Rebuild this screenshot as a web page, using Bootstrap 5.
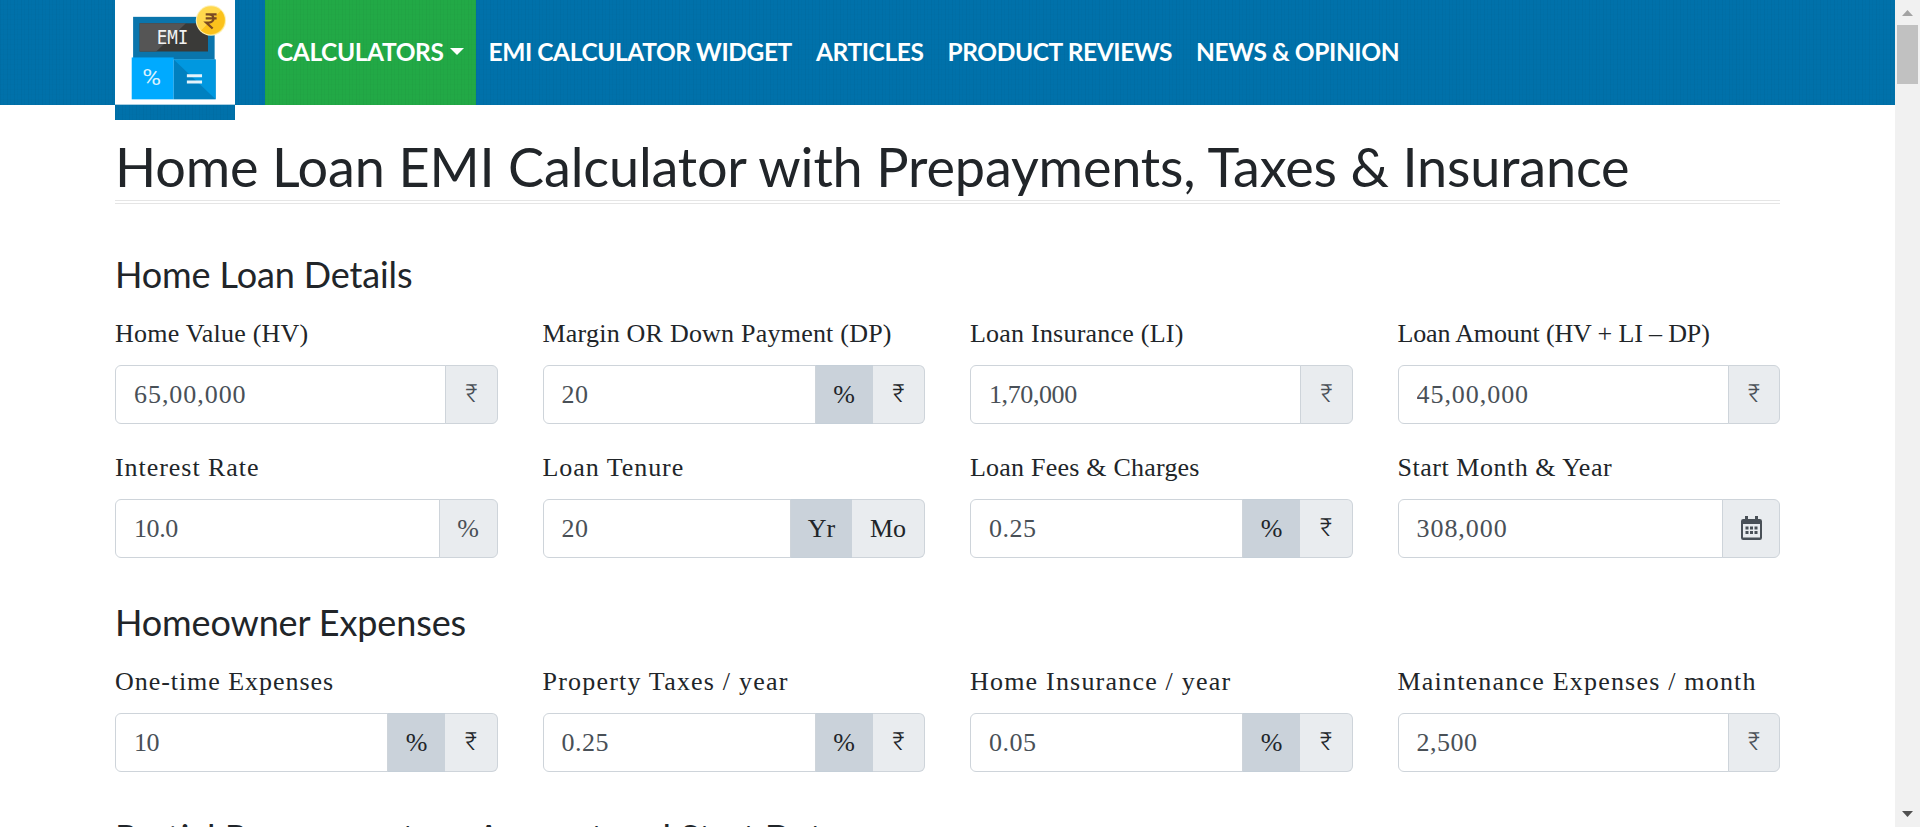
<!DOCTYPE html>
<html lang="en">
<head>
<meta charset="utf-8">
<meta name="viewport" content="width=device-width, initial-scale=1">
<title>Home Loan EMI Calculator</title>
<link href="https://cdn.jsdelivr.net/npm/bootstrap@5.3.0/dist/css/bootstrap.min.css" rel="stylesheet">
<style>
  body { font-family: "Liberation Serif", serif; font-size: 26px; line-height: 36px; color: #212529; height: 827px; }
  .weave { background-image:
      repeating-linear-gradient(90deg, rgba(0,0,0,.03) 0 1px, transparent 1px 3px, rgba(0,0,0,.015) 3px 4px, transparent 4px 7px),
      repeating-linear-gradient(0deg, rgba(0,0,0,.01) 0 1px, transparent 1px 5px); }
  .topbar { background-color: #0071aa; height: 105px; padding-left: 115px; }
  .brand-tile { width: 120px; height: 120px; margin-right: 30px; background-color: #0071aa; }
  .brand-tile svg { display: block; background-color: #fff; border-bottom: 1px solid #a9cfe2; }
  .topbar .nav-link { font: 700 24.5px/36px Lato, sans-serif; letter-spacing: -.4px; color: #fff; padding: 0 12px 1px; height: 105px; display: flex; align-items: center; white-space: nowrap; }
  .topbar .nav-link.active { background-color: #22a946; color: #fff; }
  .topbar .dropdown-toggle::after { margin-left: 7px; vertical-align: 0; margin-top: -1px; border-top-width: 7px; border-left-width: 7px; border-right-width: 7px; }
  .sheet { padding: 0 115px; }
  h1, h2 { font-family: Lato, sans-serif; font-weight: 400; white-space: nowrap; }
  h1 { font-size: 54px; line-height: 65px; letter-spacing: -.15px; margin: 29px 0 0; height: 70px; border-bottom: 4px double #e5e5e5; }
  h2 { font-size: 36px; line-height: 43px; letter-spacing: -.12px; }
  .group-title { margin: 49px 0 20px; }
  .group-title-next { margin: 43px 0 20px; }
  .group-title-last { margin: 44px 0 0; letter-spacing: 0; }
  .fields { --bs-gutter-x: 45px; --bs-gutter-y: 0; row-gap: 26px; }
  .fields .form-label { height: 36px; margin: 0 0 13px; display: block; letter-spacing: .22px; white-space: nowrap; }
  .fields .form-label.snug { letter-spacing: -.15px; }
  .fields .form-label.airy { letter-spacing: .53px; }
  .fields .form-label.wide { letter-spacing: .95px; }
  .fields .form-label.wider { letter-spacing: 1.2px; }
  .fields .input-group { height: 59px; }
  .fields .form-control { font-size: 26px; letter-spacing: .5px; color: #495057; border-color: #ced4da; border-radius: 6px; padding: 0 18px; }
  .fields .form-control.open { letter-spacing: .95px; }
  .fields .form-control.tight { letter-spacing: -.4px; }
  .fields .input-group-text { font-size: 26px; color: #495057; background-color: #e9ecef; border-color: #ced4da; border-radius: 6px; padding: 0 0 1px; justify-content: center; }
  .fields .unit { color: #212529; border-left: 0; }
  .fields .unit.chosen { background-color: #cad2da; border-color: #c5cfd8; border-left: 1px solid #c5cfd8; }
  .fields .w-rs { width: 52.500px; font-family: Roboto, sans-serif; font-weight: 300; font-size: 25px; }
  .w-pc { width: 59px; } .w-cal { width: 58px; } .w-yr { width: 63px; } .w-mo { width: 73px; }
  .scroller { width: 25px; background-color: #f1f1f1; padding: 10px 2px; }
  .scroller .thumb { height: 59px; background-color: #c1c1c1; margin-top: 9px; }
</style>
</head>
<body class="d-flex overflow-hidden bg-white">
<div class="flex-grow-1 overflow-hidden">
  <nav class="topbar weave d-flex align-items-start">
    <a class="brand-tile weave d-block flex-shrink-0" href="#" aria-label="EMI Calculator">
      <svg width="120" height="105" viewBox="0 0 120 105">
        <rect x="17.7" y="17" width="82.3" height="43" fill="#0a75ac"/>
        <rect x="24.3" y="23.5" width="69" height="28.5" fill="#3a3a38"/>
        <path d="M24.3 23.5H71L41 52H24.3z" fill="#555"/>
        <rect x="16.3" y="58" width="42.4" height="42.3" fill="#00aaff"/>
        <rect x="58.7" y="60" width="42.3" height="40.3" fill="#0080c0"/>
        <path d="M58.7 60H101v40.3z" fill="#0098e0"/>
        <text x="41.500" y="44" font-family="DejaVu Sans Mono, monospace" font-size="19" textLength="32" lengthAdjust="spacingAndGlyphs" fill="#f2f2f2">EMI</text>
        <text x="27" y="86" font-family="Roboto, sans-serif" font-size="22" textLength="19" lengthAdjust="spacingAndGlyphs" fill="#d9f2ff">%</text>
        <path d="M72 76.5h15.3M72 82.8h15.3" stroke="#e4f3fb" stroke-width="3"/>
        <circle cx="96.3" cy="20.7" r="15.3" fill="#fdf0b5"/>
        <circle cx="96.3" cy="20.7" r="14.3" fill="#ffd84d"/>
        <path d="M106.4 10.6A14.3 14.3 0 0 1 86.2 30.8z" fill="#fbc21c"/>
        <path d="M91 14.500h11M91 18.600h11M91 14.500h3c6.500 0 6.500 8.300 0 8.300H91.500l6.500 6" fill="none" stroke="#7a4a22" stroke-width="2.300"/>
      </svg>
    </a>
    <ul class="nav flex-nowrap">
      <li class="nav-item"><a class="nav-link active weave dropdown-toggle" href="#">CALCULATORS</a></li>
      <li class="nav-item"><a class="nav-link" href="#">EMI CALCULATOR WIDGET</a></li>
      <li class="nav-item"><a class="nav-link" href="#">ARTICLES</a></li>
      <li class="nav-item"><a class="nav-link" href="#">PRODUCT REVIEWS</a></li>
      <li class="nav-item"><a class="nav-link" href="#">NEWS &amp; OPINION</a></li>
    </ul>
  </nav>
  <main class="sheet">
    <h1>Home Loan EMI Calculator with Prepayments, Taxes &amp; Insurance</h1>
    <h2 class="group-title">Home Loan Details</h2>
    <div class="row row-cols-4 fields">
      <div class="col"><label class="form-label" for="hv">Home Value (HV)</label>
        <div class="input-group flex-nowrap"><input id="hv" class="form-control open" value="65,00,000"><span class="input-group-text w-rs">₹</span></div></div>
      <div class="col"><label class="form-label" for="dp">Margin OR Down Payment (DP)</label>
        <div class="input-group flex-nowrap"><input id="dp" class="form-control" value="20"><span class="input-group-text unit chosen w-pc">%</span><span class="input-group-text unit w-rs">₹</span></div></div>
      <div class="col"><label class="form-label" for="li">Loan Insurance (LI)</label>
        <div class="input-group flex-nowrap"><input id="li" class="form-control tight" value="1,70,000"><span class="input-group-text w-rs">₹</span></div></div>
      <div class="col"><label class="form-label snug" for="la">Loan Amount (HV + LI – DP)</label>
        <div class="input-group flex-nowrap"><input id="la" class="form-control open" value="45,00,000"><span class="input-group-text w-rs">₹</span></div></div>
      <div class="col"><label class="form-label wide" for="ir">Interest Rate</label>
        <div class="input-group flex-nowrap"><input id="ir" class="form-control tight" value="10.0"><span class="input-group-text w-pc">%</span></div></div>
      <div class="col"><label class="form-label wide" for="lt">Loan Tenure</label>
        <div class="input-group flex-nowrap"><input id="lt" class="form-control" value="20"><span class="input-group-text unit chosen w-yr">Yr</span><span class="input-group-text unit w-mo">Mo</span></div></div>
      <div class="col"><label class="form-label" for="lf">Loan Fees &amp; Charges</label>
        <div class="input-group flex-nowrap"><input id="lf" class="form-control" value="0.25"><span class="input-group-text unit chosen w-pc">%</span><span class="input-group-text unit w-rs">₹</span></div></div>
      <div class="col"><label class="form-label airy" for="sm">Start Month &amp; Year</label>
        <div class="input-group flex-nowrap"><input id="sm" class="form-control open" value="308,000"><span class="input-group-text w-cal">
          <svg width="21" height="24" viewBox="0 0 21 24"><path fill="#495057" fill-rule="evenodd" d="M4 0h3v3h7V0h3v3h1.800A2.200 2.200 0 0 1 21 5.200v16.600A2.200 2.200 0 0 1 18.800 24H2.200A2.200 2.200 0 0 1 0 21.800V5.200A2.200 2.200 0 0 1 2.200 3H4zM2 8v13.500h17V8zM4.500 10.500h3v3h-3zM9 10.500h3v3H9zM13.500 10.500h3v3h-3zM4.500 15h3v3h-3zM9 15h3v3H9zM13.500 15h3v3h-3z"/></svg></span></div></div>
    </div>
    <h2 class="group-title-next">Homeowner Expenses</h2>
    <div class="row row-cols-4 fields">
      <div class="col"><label class="form-label wide" for="oe">One-time Expenses</label>
        <div class="input-group flex-nowrap"><input id="oe" class="form-control tight" value="10"><span class="input-group-text unit chosen w-pc">%</span><span class="input-group-text unit w-rs">₹</span></div></div>
      <div class="col"><label class="form-label wider" for="pt">Property Taxes / year</label>
        <div class="input-group flex-nowrap"><input id="pt" class="form-control" value="0.25"><span class="input-group-text unit chosen w-pc">%</span><span class="input-group-text unit w-rs">₹</span></div></div>
      <div class="col"><label class="form-label wider" for="hi">Home Insurance / year</label>
        <div class="input-group flex-nowrap"><input id="hi" class="form-control" value="0.05"><span class="input-group-text unit chosen w-pc">%</span><span class="input-group-text unit w-rs">₹</span></div></div>
      <div class="col"><label class="form-label wider" for="me">Maintenance Expenses / month</label>
        <div class="input-group flex-nowrap"><input id="me" class="form-control" value="2,500"><span class="input-group-text w-rs">₹</span></div></div>
    </div>
    <h2 class="group-title-last">Partial Prepayments — Amount and Start Date</h2>
  </main>
</div>
<aside class="scroller flex-shrink-0 d-flex flex-column" aria-hidden="true">
  <svg class="align-self-center" width="11" height="6" viewBox="0 0 11 6"><path d="M5.500 0 11 6H0z" fill="#a3a3a3"/></svg>
  <div class="thumb"></div>
  <svg class="align-self-center mt-auto" width="11" height="6" viewBox="0 0 11 6"><path d="M0 0h11L5.500 6z" fill="#505050"/></svg>
</aside>
<script src="https://cdn.jsdelivr.net/npm/bootstrap@5.3.0/dist/js/bootstrap.bundle.min.js"></script>
</body>
</html>
